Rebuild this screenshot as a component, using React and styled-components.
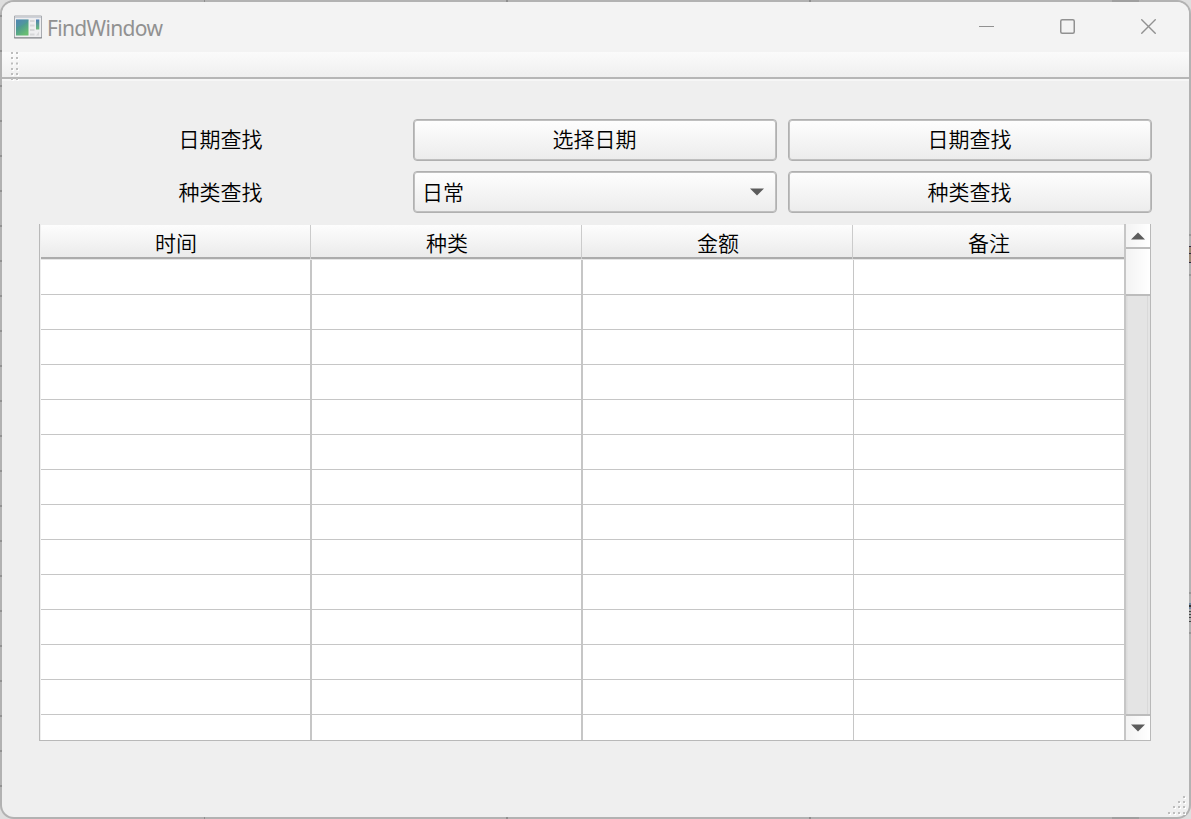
import React from 'react';
import styled, { createGlobalStyle } from 'styled-components';

const Global = createGlobalStyle`
  * { box-sizing: border-box; }
  body { margin: 0; overflow: hidden; background: #dedede; }
`;

const Desktop = styled.div`
  position: relative;
  width: 1191px;
  height: 819px;
  padding: 2px;
  border-radius: 14px;
  color: #000;
  font-family: 'Noto Sans CJK SC', sans-serif;
  font-size: 21px;
  font-weight: 350;
  background:
    linear-gradient(#30283f 0 1px, #9b8a77 1px 7px, #30283f 7px 8px, #9b8a77 8px 16px, #30283f 16px) 1189px 246px / 2px 17px no-repeat,
    linear-gradient(#7188a0 0 2px, #333 2px 4px, #7188a0 4px 6px, #aaa 6px 8px, #444 8px 9px, #aaa 9px 11px, #444 11px 12px, #aaa 12px 14px, #444 14px 15px, #aaa 15px 18px, #444 18px) 1189px 603px / 2px 19px no-repeat,
    linear-gradient(#969696, #969696) 1189px 234px / 2px 2px no-repeat,
    linear-gradient(#969696, #969696) 1189px 274px / 2px 2px no-repeat,
    linear-gradient(#969696, #969696) 1189px 592px / 2px 2px no-repeat,
    linear-gradient(#969696, #969696) 1189px 632px / 2px 2px no-repeat,
    repeating-linear-gradient(to bottom, transparent 0 15px, #929292 15px 17px, transparent 17px 35px) 0 0 / 2px 100% no-repeat,
    linear-gradient(#8e8e8e, #8e8e8e) 204px 0 / 1px 100% no-repeat,
    linear-gradient(#8e8e8e, #8e8e8e) 506px 0 / 2px 100% no-repeat,
    linear-gradient(#8e8e8e, #8e8e8e) 809px 0 / 2px 100% no-repeat,
    linear-gradient(#9f9f9f, #9f9f9f) 1112px 0 / 27px 100% no-repeat,
    #b2b2b2;
`;

const Window = styled.div`
  display: flex;
  flex-direction: column;
  width: 1187px;
  height: 815px;
  overflow: hidden;
  border-radius: 12px;
  background: #efefef;
`;

const TitleBar = styled.header`
  display: flex;
  align-items: center;
  flex: none;
  height: 50px;
  padding: 0 0 1px 12px;
  background: #f3f3f3;
`;

const Title = styled.h1`
  flex: 1;
  margin: 2px 0 0 5px;
  color: #919191;
  font: 400 21px/28px 'Noto Sans', sans-serif;
  letter-spacing: -0.65px;
`;

const Controls = styled.div`
  display: flex;
  height: 49px;
`;

const Control = styled.button`
  display: flex;
  align-items: center;
  justify-content: center;
  width: 81px;
  padding: 0;
  border: 0;
  background: none;
`;

const ToolBar = styled.div`
  flex: none;
  height: 29px;
  padding-left: 9px;
  background: linear-gradient(#fbfbfb, #efefef 25px, #b6b6b6 25px 27px, #f6f6f6 27px);
`;

const Handle = styled.svg`
  display: block;
`;

const Content = styled.main`
  display: flex;
  flex-direction: column;
  padding: 38px 37px 0;
`;

const Form = styled.div`
  display: grid;
  grid-template-columns: 363px 364px 364px;
  grid-auto-rows: 42px;
  gap: 10px 11px;
  margin-bottom: 11px;
`;

const Label = styled.span`
  display: flex;
  align-items: center;
  justify-content: center;
  padding-bottom: ${(p) => (p.$raised ? 4 : 2)}px;
`;

const Button = styled.button`
  display: flex;
  align-items: center;
  justify-content: ${(p) => (p.$select ? 'space-between' : 'center')};
  padding: ${(p) => (p.$select ? '0 12px 2px 8px' : p.$raised ? '0 1px 4px 0' : '0 1px 2px 0')};
  border: 1px solid #b0b0b0;
  border-radius: 4px;
  background: linear-gradient(#fefefe, #ececec);
  box-shadow: inset 0 0 0 1px #bfbfbf;
  color: inherit;
  font: inherit;

  svg {
    position: relative;
    top: 1px;
  }
`;

const TableFrame = styled.div`
  display: flex;
  width: 1112px;
  height: 517px;
  border: solid #b9b9b9;
  border-width: 0 1px 1px;
  background: #fff;
`;

const Table = styled.div`
  display: flex;
  flex-direction: column;
  width: 1085px;
  border-left: 1px solid #efefef;
  border-right: 1px solid #c6c6c6;
  overflow: hidden;
`;

const HeaderRow = styled.div`
  display: grid;
  grid-template-columns: 270px 271px 271px 271px;
  flex: none;
  height: 36px;
  border-top: 1px solid #efefef;
  border-bottom: 1px solid #e6e6e6;
`;

const HeaderCell = styled.div`
  display: flex;
  align-items: center;
  justify-content: center;
  padding: 0 0 1px ${(p) => (p.$shift ? 2 : 1)}px;
  border-right: ${(p) => (p.$last ? '0' : '1px solid #cbcbcb')};
  background: linear-gradient(#fdfdfd, #ebebeb 32px, #acacac 32px);
  line-height: 30px;
`;

const Body = styled.div`
  flex: 1;
  overflow: hidden;
`;

const Row = styled.div`
  display: grid;
  grid-template-columns: 271px 271px 271px 270px;
  height: 35px;
  border-bottom: 1px solid #c6c6c6;
`;

const Cell = styled.div`
  border-right: ${(p) => p.$line}px solid #c6c6c6;
`;

const ScrollBar = styled.div`
  display: flex;
  flex-direction: column;
  width: 25px;
  border-left: 1px solid #c6c6c6;
  background: linear-gradient(to right, #dbdbdb 1px, #e4e4e4 2px 21px, #d9d9d9 21px 22px, #e4e4e4 22px);
`;

const ScrollPart = styled.div`
  display: flex;
  align-items: center;
  justify-content: center;
  flex: none;
  height: ${(p) => p.$height}px;
  padding-right: 1px;
  border: 0 solid #bcbcbc;
  border-top-width: ${(p) => (p.$down ? 2 : 0)}px;
  border-bottom-width: ${(p) => (p.$down ? 0 : 2)}px;
  background: linear-gradient(to right, #f3f3f3, #ffffff);
`;

const Track = styled.div`
  flex: 1;
`;

const SizeGrip = styled.svg`
  position: absolute;
  right: 4px;
  bottom: 4px;
`;

const AppIcon = () => (
  <svg width="28" height="24" viewBox="0 0 28 24">
    <defs>
      <linearGradient id="screen" x1="0" y1="0" x2=".6" y2="1">
        <stop offset="0" stopColor="#4b83ae" />
        <stop offset=".5" stopColor="#4e9b91" />
        <stop offset="1" stopColor="#68bd72" />
      </linearGradient>
      <linearGradient id="strip" x1="0" y1="0" x2="0" y2="1">
        <stop offset="0" stopColor="#4d7eb6" />
        <stop offset="1" stopColor="#6bbd78" />
      </linearGradient>
    </defs>
    <path d="M.5 1H27.5V23H.5Z" fill="#eeeef0" stroke="#a8abb0" />
    <path d="M1 2.5H27" stroke="#ccd0d9" />
    <path d="M0 22.8H28" stroke="#85888c" />
    <path d="M2 4.5H14.5V20.5H2Z" fill="url(#screen)" />
    <path d="M2 12Q8 11 14.5 6V4.5H2Z" fill="#5b8ebd" opacity=".3" />
    <path d="M16 6H20.5M16 10.5H20.5M16 15H20.5M16 19.5H20.5" stroke="#d6d7d9" strokeWidth="2" />
    <path d="M22 4.5H25.3V14.5H22Z" fill="url(#strip)" />
    <path d="M22 20.5L25 16.5V20.5Z" fill="#d7d8da" />
  </svg>
);

const Arrow = ({ up }) => (
  <svg width="14" height="8" viewBox="0 0 14 8">
    <path d={up ? 'M0 7.5L7 .5L14 7.5Z' : 'M0 .5H14L7 7.5Z'} fill="#5c5c5c" />
  </svg>
);

const headings = ['时间', '种类', '金额', '备注'];
const lineWidths = [2, 2, 1, 0];
const handleDots = [0, 5, 10.5, 16, 21, 26];
const gripDots = [[12, 0], [7, 5], [12, 5], [2, 10], [7, 10], [12, 10], [-3, 16], [2, 16], [7, 16], [12, 16]];

export default function App() {
  return (
    <>
      <Global />
      <Desktop>
        <Window>
          <TitleBar>
            <AppIcon />
            <Title>FindWindow</Title>
            <Controls>
              <Control aria-label="Minimize">
                <svg width="15" height="15"><path d="M0 7.5H15" stroke="#919191" /></svg>
              </Control>
              <Control aria-label="Maximize">
                <svg width="15" height="15"><rect x=".75" y=".75" width="13.5" height="13.5" rx="1.5" fill="none" stroke="#919191" strokeWidth="1.5" /></svg>
              </Control>
              <Control aria-label="Close">
                <svg width="15" height="15"><path d="M.3 .3L14.7 14.7M14.7 .3L.3 14.7" stroke="#919191" strokeWidth="1.4" /></svg>
              </Control>
            </Controls>
          </TitleBar>
          <ToolBar>
            <Handle width="9" height="29">
              {handleDots.map((y) => (
                <g key={y}>
                  <path d={`M1 ${y + 1}h2v2h-2zM6 ${y + 1}h2v2h-2z`} fill="#fff" />
                  <path d={`M0 ${y}h2v2h-2zM5 ${y}h2v2h-2z`} fill="#bdbdbd" />
                </g>
              ))}
            </Handle>
          </ToolBar>
          <Content>
            <Form>
              <Label $raised>日期查找</Label>
              <Button $raised>选择日期</Button>
              <Button $raised>日期查找</Button>
              <Label>种类查找</Label>
              <Button $select>日常<Arrow /></Button>
              <Button>种类查找</Button>
            </Form>
            <TableFrame>
              <Table>
                <HeaderRow>
                  {headings.map((text, i) => (
                    <HeaderCell key={text} $last={i === 3} $shift={i === 1 || i === 2}>{text}</HeaderCell>
                  ))}
                </HeaderRow>
                <Body>
                  {Array.from({ length: 14 }, (_, row) => (
                    <Row key={row}>
                      {lineWidths.map((width, i) => <Cell key={i} $line={width} />)}
                    </Row>
                  ))}
                </Body>
              </Table>
              <ScrollBar>
                <ScrollPart $height={25}><Arrow up /></ScrollPart>
                <ScrollPart $height={47} />
                <Track />
                <ScrollPart $height={26} $down><Arrow /></ScrollPart>
              </ScrollBar>
            </TableFrame>
          </Content>
        </Window>
        <SizeGrip width="20" height="20" viewBox="-4 -1 20 20">
          {gripDots.map(([x, y]) => (
            <g key={`${x}-${y}`}>
              <path d={`M${x + 1} ${y + 1}h2v2h-2z`} fill="#fff" />
              <path d={`M${x} ${y}h2v2h-2z`} fill="#bdbdbd" />
            </g>
          ))}
        </SizeGrip>
      </Desktop>
    </>
  );
}
